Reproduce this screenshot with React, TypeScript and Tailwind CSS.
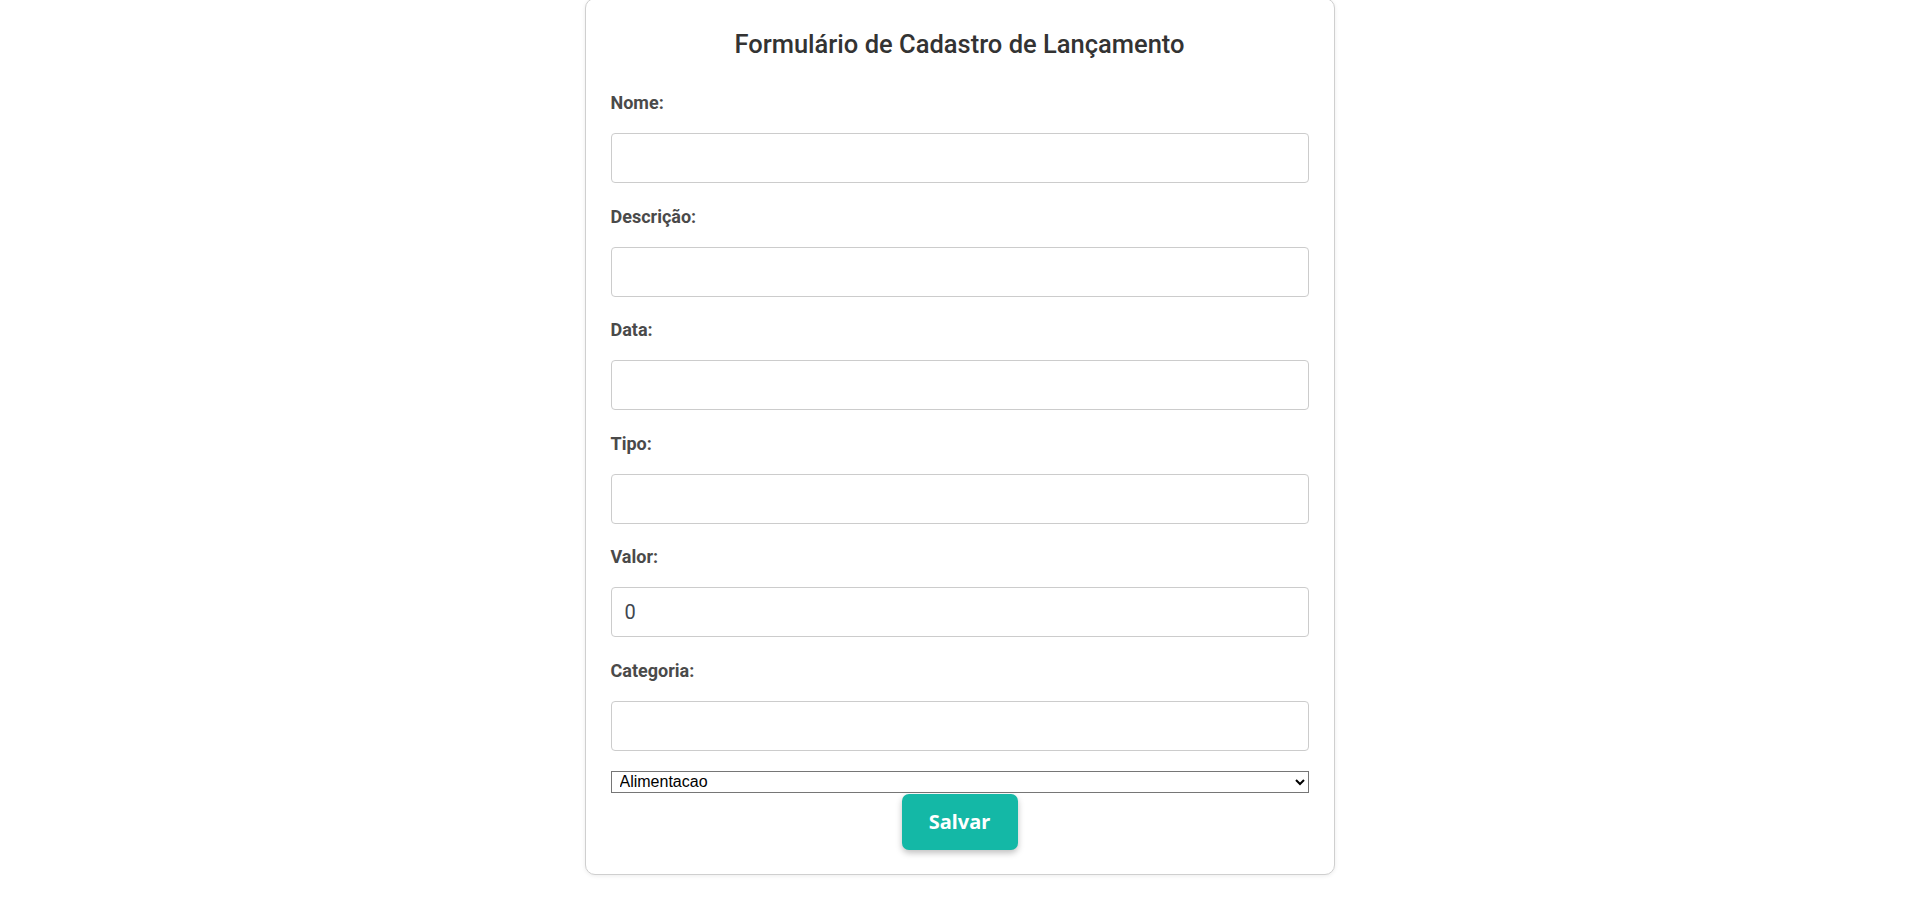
import React, { useState } from 'react';

const campos = ['Nome', 'Descrição', 'Data', 'Tipo', 'Valor', 'Categoria'];

const categorias = ['Alimentacao', 'Transporte', 'Moradia', 'Lazer', 'Saude', 'Educacao'];

export default function App() {
  const [valores, setValores] = useState<Record<string, string>>({ Valor: '0' });
  const [categoria, setCategoria] = useState<string>('Alimentacao');

  const atualizar = (campo: string, v: string) => setValores(prev => ({ ...prev, [campo]: v }));

  return (
    <div className="min-h-screen bg-white font-['Roboto',sans-serif]">
      <form
        onSubmit={e => e.preventDefault()}
        className="mx-auto -mt-[2px] w-[750px] rounded-[10px] border border-[#cfcfcf] bg-white px-[25px] pt-[29px] pb-[24px] shadow-[0_1px_4px_rgba(0,0,0,0.08)]"
      >
        <h1 className="mb-[31px] text-center text-[25.5px] leading-[32px] font-medium text-[#333]">
          Formulário de Cadastro de Lançamento
        </h1>

        {campos.map((campo, i) => (
          <div key={campo}>
            <label className="mb-[18px] block text-[18px] leading-[24px] font-bold text-[#4a4a4a]">
              {campo}:
            </label>
            <input
              type={campo === 'Valor' ? 'number' : 'text'}
              value={valores[campo] ?? ''}
              onChange={e => atualizar(campo, e.target.value)}
              className={`block h-[50px] w-full rounded-[4px] border border-[#cccccc] bg-white px-[13px] text-[20px] text-[#3f4750] outline-none [appearance:textfield] ${
                i === campos.length - 1 ? 'mb-[20px]' : 'mb-[21.6px]'
              }`}
            />
          </div>
        ))}

        <select
          value={categoria}
          onChange={e => setCategoria(e.target.value)}
          className="block h-[22px] w-full border border-[#767676] bg-white pl-[4px] font-['Liberation_Sans',Arial,sans-serif] text-[16px] leading-[18px] text-black"
        >
          {categorias.map(c => (
            <option key={c} value={c}>{c}</option>
          ))}
        </select>

        <div className="mt-[1px] flex justify-center">
          <button
            type="submit"
            className="h-[56px] w-[116px] rounded-[7px] bg-[#14b8a6] font-['Noto_Sans',sans-serif] text-[20px] font-bold text-white shadow-[0_3px_6px_rgba(0,0,0,0.25)]"
          >
            Salvar
          </button>
        </div>
      </form>
    </div>
  );
}
